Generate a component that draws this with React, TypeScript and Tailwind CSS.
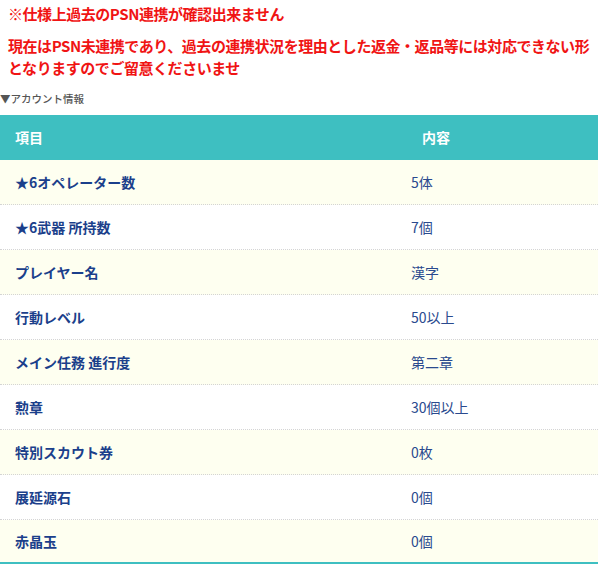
import React from 'react';

const rows: [string, string][] = [
  ['★6オペレーター数', '5体'],
  ['★6武器 所持数', '7個'],
  ['プレイヤー名', '漢字'],
  ['行動レベル', '50以上'],
  ['メイン任務 進行度', '第二章'],
  ['勲章', '30個以上'],
  ['特別スカウト券', '0枚'],
  ['展延源石', '0個'],
  ['赤晶玉', '0個'],
];

export default function App() {
  return (
    <div
      className="w-[600px] h-[574px] bg-white overflow-hidden"
      style={{ fontFamily: '"Noto Sans CJK JP", "Noto Sans", sans-serif' }}
    >
      {/* 注意書き */}
      <p className="pl-[8px] pt-[3px] text-[15px] leading-[22px] font-bold text-[#f01414] tracking-[-0.45px]">
        ※仕様上過去のPSN連携が確認出来ません
      </p>
      <p className="pl-[8px] mt-[10px] text-[15px] leading-[22px] font-bold text-[#f01414] tracking-[-0.45px]">
        現在はPSN未連携であり、過去の連携状況を理由とした返金・返品等には対応できない形
        <br />
        となりますのでご留意くださいませ
      </p>

      <div className="mt-[13px] text-[10.5px] leading-[14px] text-[#555] font-medium">▼アカウント情報</div>

      {/* アカウント情報テーブル */}
      <div className="mt-[9px] w-[598px]">
        <div className="flex h-[45px] items-center bg-[#3ebfc1] text-white text-[14px] font-bold">
          <div className="w-[407px] pl-[15px]">項目</div>
          <div className="pl-[15px]">内容</div>
        </div>
        {rows.map(([label, value], i) => (
          <div
            key={label}
            className={
              i === rows.length - 1
                ? 'flex h-[44px] items-center bg-[#fefff0] border-b-2 border-[#3ebfc1]'
                : i % 2 === 0
                  ? 'flex h-[45px] items-center bg-[#fefff0] border-b border-dotted border-[#d4d4d4]'
                  : 'flex h-[45px] items-center bg-white border-b border-dotted border-[#d4d4d4]'
            }
          >
            <div className="w-[407px] pl-[15px] text-[14px] font-bold text-[#1b3f8b]">{label}</div>
            <div className="pl-[4px] text-[14px] text-[#2a4a8e]">{value}</div>
          </div>
        ))}
      </div>
    </div>
  );
}
